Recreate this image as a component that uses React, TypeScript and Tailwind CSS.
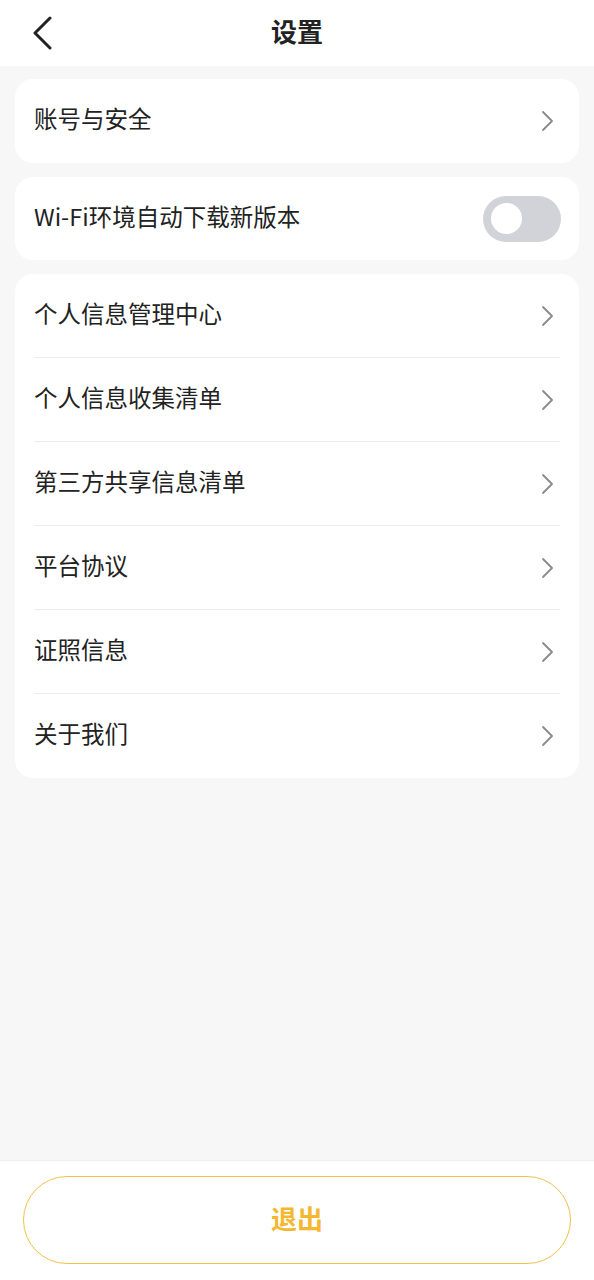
const font = { fontFamily: '"Noto Sans CJK SC", "Noto Sans", sans-serif' };

const Chevron = () => (
  <svg width="14" height="22" viewBox="0 0 14 22" fill="none" className="shrink-0">
    <path d="M2 2l9 9-9 9" stroke="#8a8a8a" strokeWidth="1.8" strokeLinecap="round" strokeLinejoin="round" />
  </svg>
);

const rows = ["个人信息管理中心", "个人信息收集清单", "第三方共享信息清单", "平台协议", "证照信息", "关于我们"];

export default function App() {
  return (
    <div className="w-[594px] h-[1280px] flex flex-col bg-[#f7f7f7]" style={font}>
      {/* Header */}
      <div className="h-[66px] bg-white flex items-center relative shrink-0">
        <svg width="22" height="34" viewBox="0 0 22 34" fill="none" className="ml-[32px]">
          <path d="M18 2L3 17l15 15" stroke="#222" strokeWidth="3" strokeLinecap="round" strokeLinejoin="round" />
        </svg>
        <h1 className="absolute left-0 right-0 text-center text-[26px] font-bold text-[#222] pb-[6px] pointer-events-none">设置</h1>
      </div>

      <div className="flex-1 flex flex-col gap-[14px] px-[15px] pt-[13px]">
        {/* Account */}
        <div className="bg-white rounded-[18px] h-[84px] flex items-center justify-between pl-[19px] pr-[24px]">
          <span className="text-[23.5px] text-[#222] mb-[4px]">账号与安全</span>
          <Chevron />
        </div>

        {/* Wi-Fi toggle */}
        <div className="bg-white rounded-[18px] h-[83px] flex items-center justify-between pl-[19px] pr-[18px]">
          <span className="text-[23.5px] text-[#222] mb-[4px]">Wi-Fi环境自动下载新版本</span>
          <div className="w-[78px] h-[46px] rounded-full bg-[#d2d3d8] flex items-center px-[8px]">
            <div className="w-[31px] h-[31px] rounded-full bg-white" />
          </div>
        </div>

        {/* List */}
        <div className="bg-white rounded-[18px] px-[19px]">
          {rows.map((r, i) => (
            <div
              key={r}
              className={`h-[84px] flex items-center justify-between pr-[5px] ${i < rows.length - 1 ? "border-b border-[#ececec]" : ""}`}
            >
              <span className="text-[23.5px] text-[#222] mb-[4px]">{r}</span>
              <Chevron />
            </div>
          ))}
        </div>
      </div>

      {/* Logout */}
      <div className="bg-white h-[120px] shrink-0 px-[23px] pt-[15px] border-t border-[#f0f0f0]">
        <button className="w-full h-[88px] rounded-full border-[1.5px] border-[#f1c24a] text-[26px] font-bold text-[#f5b730] pb-[5px]">
          退出
        </button>
      </div>
    </div>
  );
}
